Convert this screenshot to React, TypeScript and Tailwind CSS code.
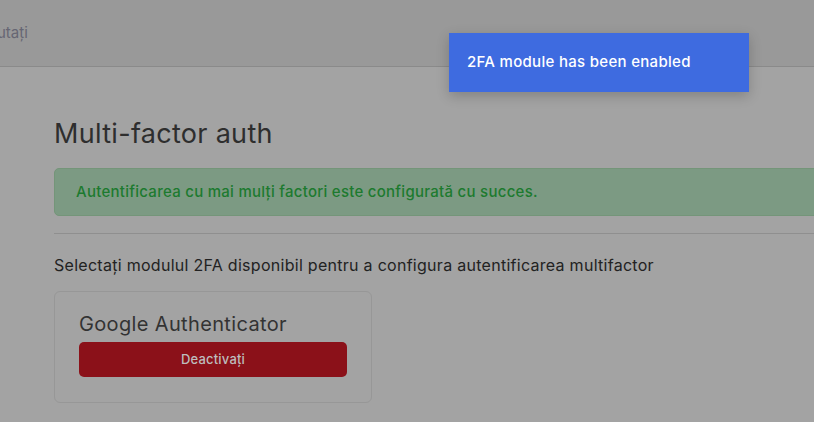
import React from 'react';

export default function App() {
  return (
    <div className="relative w-[814px] h-[422px] overflow-hidden bg-[#a3a3a3]" style={{ fontFamily: 'Inter, "Noto Sans", sans-serif' }}>
      <header className="h-[67px] bg-[#999999] border-b border-[#8a8a8a] flex items-center">
        <span className="-ml-[3px] text-[15px] text-[#666673]">utați</span>
      </header>

      <main className="w-[1000px] pl-[54px] pt-[50px]">
        <h1 className="text-[27px] leading-[34px] text-[#2e2e2e] font-normal tracking-[0.3px]">Multi-factor auth</h1>

        <div className="mt-[17px] h-[48px] flex items-center pl-[21px] rounded-[5px] bg-[#7c9a83] border border-[#749579]">
          <span className="text-[15px] font-medium text-[#1d7a2f] tracking-[0.27px]">Autentificarea cu mai mulți factori este configurată cu succes.</span>
        </div>

        <hr className="mt-[17px] border-0 border-t border-[#8f8f8f]" />

        <p className="mt-[20px] text-[16px] leading-[22px] text-[#222222] tracking-[0.28px]">
          Selectați modulul 2FA disponibil pentru a configura autentificarea multifactor
        </p>

        <div className="mt-[15px] w-[318px] h-[112px] rounded-[6px] border border-[#979797] px-[24px] pt-[19px]">
          <div className="text-[20px] leading-[26px] text-[#333333] tracking-[0.35px]">Google Authenticator</div>
          <button className="mt-[5px] w-full h-[35px] rounded-[5px] bg-[#8b1119] text-[13px] font-medium text-[#bdbdbd] tracking-[0.2px]">
            Deactivați
          </button>
        </div>
      </main>

      <div className="absolute left-[449px] top-[33px] w-[300px] h-[59px] bg-[#3e6be0] shadow-[0_4px_12px_rgba(0,0,0,0.2)] flex items-center pl-[18px]">
        <span className="text-[15px] font-medium text-white tracking-[0.3px]">2FA module has been enabled</span>
      </div>
    </div>
  );
}
